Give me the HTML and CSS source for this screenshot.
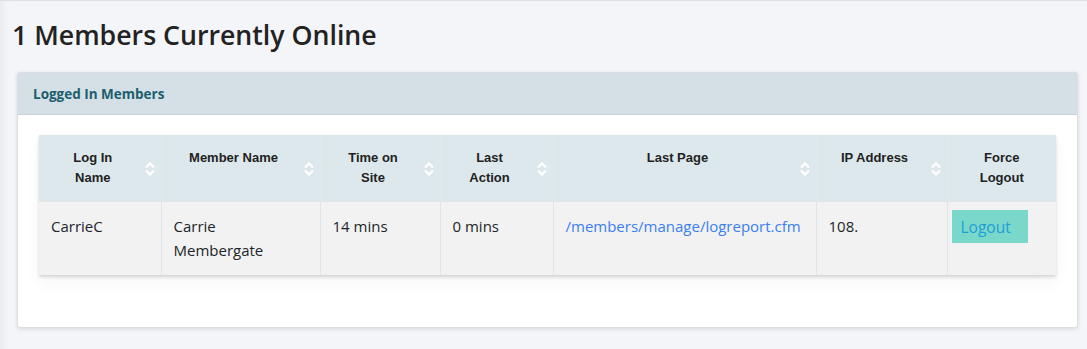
FILE: index.html
```html
<!DOCTYPE html>
<html lang="en">
  <head>
    <meta charset="UTF-8" />
    <title>Members Online</title>
    <link rel="stylesheet" href="styles.css">
  </head>
  <body>
    <h1 class="page-title">1 Members Currently Online</h1>

    <div class="card">
      <div class="card-header">Logged In Members</div>
      <div class="card-body">
        <table class="members-table">
          <thead>
            <tr>
              <th style="width: 122px">Log In<br />Name</th>
              <th style="width: 159px">Member Name</th>
              <th style="width: 120px">Time on<br />Site</th>
              <th style="width: 113px">Last<br />Action</th>
              <th style="width: 263px">Last Page</th>
              <th style="width: 131px">IP Address</th>
              <th class="no-sort" style="width: 109px">Force<br />Logout</th>
            </tr>
          </thead>
          <tbody>
            <tr>
              <td>CarrieC</td>
              <td>Carrie<br />Membergate</td>
              <td>14 mins</td>
              <td>0 mins</td>
              <td><a href="#">/members/manage/logreport.cfm</a></td>
              <td>108.</td>
              <td class="action-cell"><a class="btn-logout" href="#">Logout</a></td>
            </tr>
          </tbody>
        </table>
      </div>
    </div>
  </body>
</html>
```

FILE: styles.css
```css
* {
  box-sizing: border-box;
}

html,
body {
  height: 100%;
}

body {
  margin: 0;
  padding: 0 9px 0 12px;
  background: #f4f5f9;
  border-top: 1px solid #dfe0e4;
  box-shadow: inset 8px 0 8px -6px rgba(0, 0, 0, 0.06);
  font-family: "Open Sans", "Noto Sans", sans-serif;
  color: #212529;
}

.page-title {
  margin: 0;
  padding-top: 16px;
  height: 71px;
  font-size: 26.7px;
  font-weight: 600;
  line-height: 36px;
  color: #222;
}

/* card */
.card {
  margin-left: 5px;
  background: #fff;
  border: 1px solid #dcdfe2;
  border-radius: 3px;
  box-shadow: 0 1px 4px rgba(0, 0, 0, 0.12);
}

.card-header {
  height: 42px;
  padding: 13px 15px;
  background: #d4e0e6;
  border-bottom: 1px solid #c7d3d9;
  font-family: "Open Sans", sans-serif;
  font-size: 13.5px;
  font-weight: 700;
  line-height: 16px;
  color: #1d5e6e;
}

.card-body {
  padding: 20px 21px 52px 21px;
}

/* table */
.members-table {
  width: 1017px;
  border-collapse: collapse;
  table-layout: fixed;
  box-shadow: 0 2px 3px rgba(0, 0, 0, 0.15), 0 8px 16px rgba(0, 0, 0, 0.04);
}

.members-table th {
  position: relative;
  height: 66px;
  padding: 13px 26px 11px 12px;
  background: #dde8ec;
  border-right: 1px solid #e4e9ec;
  font-family: "Liberation Sans", Arial, sans-serif;
  font-size: 13px;
  font-weight: 700;
  line-height: 20px;
  color: #222;
  text-align: center;
  vertical-align: top;
}

.members-table th.no-sort {
  padding-right: 12px;
}

/* sort arrows */
.members-table th:not(.no-sort)::after {
  content: "";
  position: absolute;
  right: 5px;
  top: 26px;
  width: 12px;
  height: 16px;
  background: url("data:image/svg+xml;utf8,<svg xmlns='http://www.w3.org/2000/svg' width='12' height='16' viewBox='0 0 12 16'><path d='M2 6.5 6 2.5 10 6.5M2 9.5 6 13.5 10 9.5' fill='none' stroke='white' stroke-width='2.4'/></svg>") no-repeat center;
}

.members-table td {
  padding: 12px 12px 13px 12px;
  background: #f2f2f2;
  border-top: 1px solid #e3e5e7;
  border-right: 1px solid #e1e4e6;
  font-size: 15px;
  line-height: 24px;
  vertical-align: top;
}

.members-table th:last-child,
.members-table td:last-child {
  border-right: none;
}

.members-table a {
  color: #3a7ff0;
  text-decoration: none;
}

.members-table td.action-cell {
  padding: 8px 4px;
}

.btn-logout {
  display: inline-block;
  width: 76px;
  height: 33px;
  padding: 4px 9px 2px;
  background: #79d8c9;
  font-size: 15.5px;
  line-height: 26px;
}

.members-table .btn-logout {
  color: #1c9fd6;
}
```
